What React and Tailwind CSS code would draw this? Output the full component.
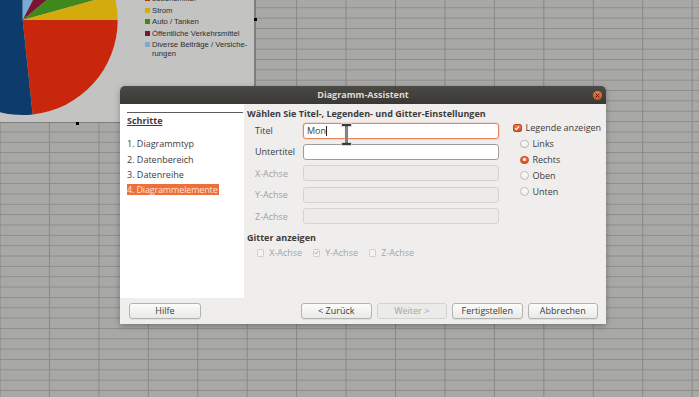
import React from "react";

const CX = 22.7;
const CY = 20;
const R = 95;

const wedge = (a0, a1) => {
  const rad = (a) => (a * Math.PI) / 180;
  const x0 = CX + R * Math.cos(rad(a0));
  const y0 = CY + R * Math.sin(rad(a0));
  const x1 = CX + R * Math.cos(rad(a1));
  const y1 = CY + R * Math.sin(rad(a1));
  const large = a1 - a0 > 180 ? 1 : 0;
  return `M${CX} ${CY} L${x0} ${y0} A${R} ${R} 0 ${large} 1 ${x1} ${y1} Z`;
};

const SLICES = [
  { from: 0, to: 84, color: "#c9270c" },
  { from: 84, to: 270, color: "#0c3b6c" },
  { from: -90, to: -62.8, color: "#78acd6" },
  { from: -62.8, to: -39.5, color: "#7b1432" },
  { from: -39.5, to: -15.5, color: "#3e881d" },
  { from: -15.5, to: 0, color: "#d3ab0d" },
];

const LEGEND = [
  { color: "#c9270c", lines: ["Lebensmittel"] },
  { color: "#d3ab0d", lines: ["Strom"] },
  { color: "#3e881d", lines: ["Auto / Tanken"] },
  { color: "#7b1432", lines: ["Öffentliche Verkehrsmittel"] },
  { color: "#78acd6", lines: ["Diverse Beiträge / Versiche-", "rungen"] },
];

const STEPS = ["1. Diagrammtyp", "2. Datenbereich", "3. Datenreihe"];

const FIELDS = [
  { label: "Titel", value: "Mon", state: "focus" },
  { label: "Untertitel", value: "", state: "normal" },
  { label: "X-Achse", value: "", state: "off" },
  { label: "Y-Achse", value: "", state: "off" },
  { label: "Z-Achse", value: "", state: "off" },
];

const POSITIONS = [
  { label: "Links", on: false },
  { label: "Rechts", on: true },
  { label: "Oben", on: false },
  { label: "Unten", on: false },
];

const GRID = [
  { label: "X-Achse", on: false },
  { label: "Y-Achse", on: true },
  { label: "Z-Achse", on: false },
];

const Chart = () => (
  <div className="absolute left-0 top-0 w-[256px] h-[123px] bg-[#c3c3c2] border-r-2 border-b border-[#7e7e7e] overflow-hidden">
    <svg className="absolute left-0 top-0" width="254" height="123" viewBox="0 0 254 123">
      {SLICES.map((s) => (
        <path key={s.from} d={wedge(s.from, s.to)} fill={s.color} />
      ))}
    </svg>
    {/* Legend */}
    <div className="relative ml-[145px] mt-[-6px] flex flex-col gap-[2.5px] font-['Liberation_Sans',Arial,sans-serif] text-[7.7px] leading-[9px] text-[#2e2e2e]">
      {LEGEND.map((item) => (
        <div key={item.lines[0]} className="flex items-start gap-[2px]">
          <span className="w-[5px] h-[5px] mt-[2px] shrink-0" style={{ backgroundColor: item.color }} />
          <div>
            {item.lines.map((l) => (
              <div key={l} className="whitespace-nowrap">{l}</div>
            ))}
          </div>
        </div>
      ))}
    </div>
  </div>
);

const Button = ({ children, disabled, className = "" }) => (
  <div
    className={`h-[16px] rounded-[3px] border text-center leading-[14px] whitespace-nowrap ${
      disabled
        ? "border-[#d2d2cf] bg-[#ebebe9] text-[#a5a5a3]"
        : "border-[#b3b3af] bg-gradient-to-b from-[#fcfcfb] to-[#e9e9e7] text-[#3c3c3c] shadow-[0_1px_0_rgba(0,0,0,0.06)]"
    } ${className}`}
  >
    {children}
  </div>
);

const Radio = ({ on }) =>
  on ? (
    <span className="w-[8.5px] h-[8.5px] rounded-full bg-gradient-to-b from-[#f07a45] to-[#d9521f] border border-[#c1481b] flex items-center justify-center">
      <span className="w-[3px] h-[3px] rounded-full bg-white" />
    </span>
  ) : (
    <span className="w-[8.5px] h-[8.5px] rounded-full bg-gradient-to-b from-[#ffffff] to-[#ececea] border border-[#b9b9b6]" />
  );

export default function App() {
  return (
    <div className="relative w-[699px] h-[397px] overflow-hidden bg-[#a8a8a7] [background-image:linear-gradient(to_right,#888887_1px,transparent_1px),linear-gradient(to_bottom,#8c8c8b_1px,transparent_1px)] [background-size:49.45px_10.35px] [background-position:-0.5px_7.3px]">
      <Chart />
      {/* selection handles */}
      <span className="absolute left-[76px] top-[122px] w-[3px] h-[3px] bg-black" />
      <span className="absolute left-[254px] top-[18px] w-[3px] h-[3px] bg-black" />

      {/* Dialog window */}
      <div className="absolute left-[120px] top-[86px] w-[486px] h-[238px] flex flex-col rounded-t-[5px] overflow-hidden shadow-[0_2px_6px_rgba(0,0,0,0.3)] font-['Open_Sans',sans-serif] text-[9px] text-[#3c3c3c]">
        <div className="relative h-[18px] shrink-0 bg-gradient-to-b from-[#4b4a45] to-[#393834] flex items-center justify-center">
          <span className="font-bold text-[#dfdbd2] leading-[18px]">Diagramm-Assistent</span>
          <span className="absolute right-[4px] top-[4.5px] w-[9px] h-[9px] rounded-full bg-gradient-to-b from-[#f27b45] to-[#d44c1b] flex items-center justify-center">
            <svg width="5" height="5" viewBox="0 0 5 5">
              <path d="M1 1 L4 4 M4 1 L1 4" stroke="#5a1f0b" strokeWidth="1" strokeLinecap="round" />
            </svg>
          </span>
        </div>

        <div className="flex-1 flex flex-col bg-[#efeeec]">
          <div className="flex h-[194px]">
            {/* Steps */}
            <div className="w-[124px] shrink-0 bg-white pl-[7px] pt-[7.5px] flex flex-col">
              <div className="h-px w-[116px] bg-[#5c5c5c]" />
              <div className="mt-[2px] h-[12px] leading-[12px] font-bold underline">Schritte</div>
              <div className="mt-[11.8px] flex flex-col items-start gap-[3.4px]">
                {STEPS.map((s) => (
                  <div key={s} className="h-[12px] leading-[12px] whitespace-nowrap">{s}</div>
                ))}
                <div className="h-[11px] leading-[11px] -ml-[0.5px] pl-[0.5px] pr-[1px] tracking-[-0.15px] whitespace-nowrap bg-[#ee6e3c] text-[#fde3d6]">
                  4. Diagrammelemente
                </div>
              </div>
            </div>

            {/* Settings */}
            <div className="flex-1 pl-[3px] pt-[4px] flex flex-col">
              <div className="h-[12px] leading-[12px] font-bold whitespace-nowrap">
                Wählen Sie Titel-, Legenden- und Gitter-Einstellungen
              </div>
              <div className="mt-[2.7px] flex items-start">
                <div className="flex flex-col gap-[5.4px]">
                  {FIELDS.map((f) => (
                    <div key={f.label} className="flex items-center h-[16px]">
                      <span className={`w-[56px] pl-[8px] ${f.state === "off" ? "text-[#a2a2a0]" : ""}`}>{f.label}</span>
                      <div
                        className={`relative w-[196px] h-[16px] rounded-[3px] border flex items-center pl-[3px] ${
                          f.state === "focus"
                            ? "border-[#e8845c] bg-white shadow-[0_0_0_1px_rgba(240,150,110,0.25)]"
                            : f.state === "normal"
                            ? "border-[#9d9d9a] bg-white"
                            : "border-[#d3d3d0] bg-[#ecebe9]"
                        }`}
                      >
                        {f.value}
                        {f.state === "focus" && <span className="w-px h-[10px] bg-[#222]" />}
                      </div>
                    </div>
                  ))}
                </div>
                <div className="ml-[14px] mt-[-2.4px] flex flex-col">
                  <div className="h-[15.8px] flex items-center gap-[4px]">
                    <span className="w-[8.5px] h-[8.5px] rounded-[2px] bg-gradient-to-b from-[#f07a45] to-[#d9521f] border border-[#c1481b] flex items-center justify-center">
                      <svg width="6" height="6" viewBox="0 0 6 6">
                        <path d="M1 3.2 L2.4 4.6 L5 1.3" stroke="white" strokeWidth="1.2" fill="none" />
                      </svg>
                    </span>
                    <span className="whitespace-nowrap">Legende anzeigen</span>
                  </div>
                  {POSITIONS.map((p) => (
                    <div key={p.label} className="h-[15.8px] flex items-center gap-[3.5px] pl-[7.4px]">
                      <Radio on={p.on} />
                      <span>{p.label}</span>
                    </div>
                  ))}
                </div>
              </div>
              <div className="mt-[7.3px] h-[12px] leading-[12px] font-bold">Gitter anzeigen</div>
              <div className="mt-[3.4px] h-[12px] flex items-center pl-[9.7px] text-[#a6a6a4]">
                {GRID.map((g) => (
                  <div key={g.label} className="w-[56px] flex items-center gap-[5px]">
                    <span className="w-[7.5px] h-[7.5px] rounded-[1.5px] border border-[#cfcfcc] bg-[#f3f3f2] flex items-center justify-center">
                      {g.on && (
                        <svg width="5" height="5" viewBox="0 0 5 5">
                          <path d="M0.7 2.6 L1.9 3.8 L4.3 1" stroke="#9a9a98" strokeWidth="0.9" fill="none" />
                        </svg>
                      )}
                    </span>
                    <span>{g.label}</span>
                  </div>
                ))}
              </div>
            </div>
          </div>

          {/* Buttons */}
          <div className="flex items-start pt-[5.3px] pl-[9.3px] pr-[8px]">
            <Button className="w-[71.4px]">Hilfe</Button>
            <div className="flex-1" />
            <div className="flex gap-[5px]">
              <Button className="w-[70.5px]">&lt; Zurück</Button>
              <Button className="w-[70.5px]" disabled>Weiter &gt;</Button>
              <Button className="w-[70.5px]">Fertigstellen</Button>
              <Button className="w-[70.5px]">Abbrechen</Button>
            </div>
          </div>
        </div>
      </div>

      {/* I-beam mouse cursor */}
      <svg className="absolute left-[340.5px] top-[123px]" width="11" height="23" viewBox="0 0 11 23">
        <path
          d="M0.5 0.5 H10.5 V3.5 H7 V19.5 H10.5 V22.5 H0.5 V19.5 H4 V3.5 H0.5 Z"
          fill="#3a3a3a"
          stroke="#eaeaea"
          strokeWidth="0.8"
        />
        <path d="M5.5 3 V20" stroke="#9a9a9a" strokeWidth="0.8" />
      </svg>
    </div>
  );
}
